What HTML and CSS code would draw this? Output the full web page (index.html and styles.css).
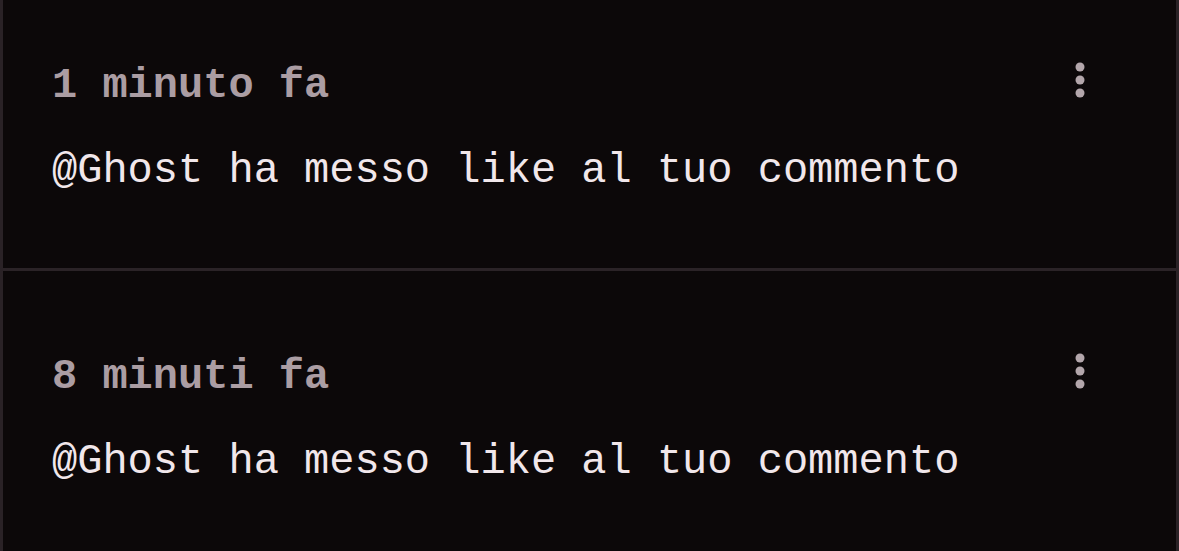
FILE: index.html
```html
<!DOCTYPE html>
<html lang="it">
<head>
  <meta charset="UTF-8" />
  <meta name="viewport" content="width=device-width, initial-scale=1.0" />
  <title>Notifiche</title>
  <link rel="stylesheet" href="styles.css">
</head>
<body>
  <div class="notif-list">
    <div class="notif-item">
      <div class="notif-body">
        <div class="notif-time">1 minuto fa</div>
        <div class="notif-text">@Ghost ha messo like al tuo commento</div>
      </div>
      <button class="notif-menu" aria-label="Altro">
        <svg width="30" height="40" viewBox="0 0 30 40">
          <circle cx="15" cy="7" r="4.5" />
          <circle cx="15" cy="20" r="4.5" />
          <circle cx="15" cy="33" r="4.5" />
        </svg>
      </button>
    </div>
    <div class="notif-item">
      <div class="notif-body">
        <div class="notif-time">8 minuti fa</div>
        <div class="notif-text">@Ghost ha messo like al tuo commento</div>
      </div>
      <button class="notif-menu" aria-label="Altro">
        <svg width="30" height="40" viewBox="0 0 30 40">
          <circle cx="15" cy="7" r="4.5" />
          <circle cx="15" cy="20" r="4.5" />
          <circle cx="15" cy="33" r="4.5" />
        </svg>
      </button>
    </div>
  </div>
</body>
</html>
```

FILE: styles.css
```css
body {
  margin: 0;
  padding: 0;
  background: #0c0809;
  font-family: 'Liberation Mono', 'DejaVu Sans Mono', monospace;
  overflow: hidden;
}
.notif-list {
  margin-top: -20px;
  border-left: 3px solid #2a2226;
  border-right: 3px solid #2a2226;
}
.notif-item {
  height: 291px;
  box-sizing: border-box;
  padding: 82px 81px 0 49px;
  display: flex;
  justify-content: space-between;
  align-items: flex-start;
  border-bottom: 3px solid #2b2327;
}
.notif-time {
  font-size: 42px;
  line-height: 48px;
  font-weight: 700;
  color: #ab9da3;
}
.notif-text {
  margin-top: 37px;
  font-size: 42px;
  line-height: 48px;
  color: #f1e7eb;
}
.notif-menu {
  background: none;
  border: none;
  padding: 0;
  margin-top: -2px;
  cursor: pointer;
  fill: #b3a6ab;
  display: block;
}
.notif-menu svg {
  display: block;
}
```
